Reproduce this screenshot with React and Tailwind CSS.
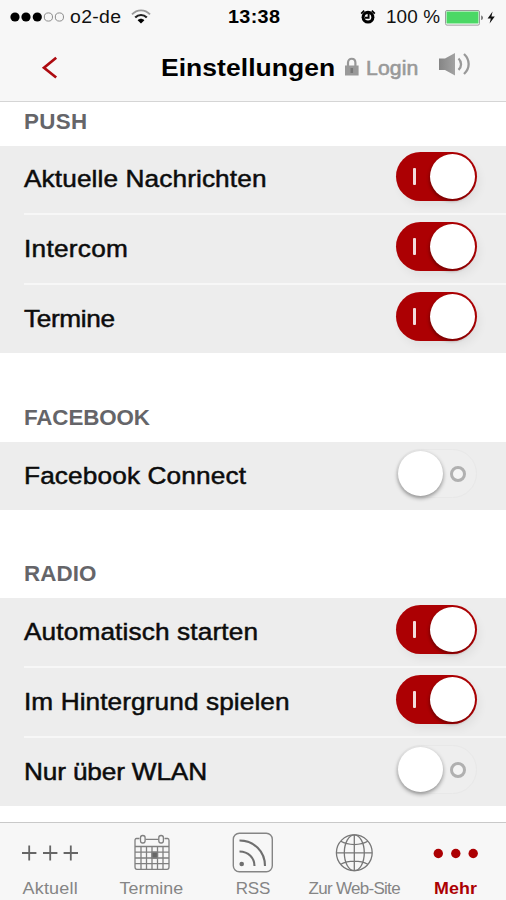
import React from "react";

function Toggle({ on }) {
  if (on) {
    return (
      <div className="flex h-[49px] w-[81px] items-center justify-between rounded-full bg-[#ac0003] pl-[17px] pr-[2px] shadow-[3px_5px_8px_rgba(0,0,0,0.05)]">
        <div className="h-[17px] w-[3px] rounded-[1px] bg-[#f3dcdc]" />
        <div className="h-[45px] w-[45px] rounded-full bg-white shadow-[-1px_2px_3px_rgba(60,0,0,0.45)]" />
      </div>
    );
  }
  return (
    <div className="flex h-[49px] w-[81px] items-center justify-between rounded-full border border-[#e8e8e8] bg-[#eeeeee] pl-[1px] pr-[10px]">
      <div className="h-[45px] w-[45px] rounded-full bg-white shadow-[0_2px_4px_rgba(0,0,0,0.42)]" />
      <div className="h-[16px] w-[16px] rounded-full border-[3px] border-[#b0b0b0] bg-[#f4f4f4]" />
    </div>
  );
}

function Row({ label, tracking, on, height, pad = "pt-[1px]", first }) {
  return (
    <div className={`flex items-start justify-between pl-6 ${height}`}>
      <div className={`flex w-full justify-between pr-[29px] ${pad} ${first ? "" : "border-t-2 border-[#f7f7f7]"}`}>
        <span
          className={`origin-left scale-x-[1.07] whitespace-nowrap pt-[19px] text-[24.5px] leading-[28px] text-[#0c0c0c] [-webkit-text-stroke:0.5px_#0c0c0c] ${tracking}`}
        >
          {label}
        </span>
        <div className="pt-[6px]">
          <Toggle on={on} />
        </div>
      </div>
    </div>
  );
}

function Heading({ children, className }) {
  return (
    <h2 className={`flex items-end bg-white pl-6 text-[21.5px] font-bold leading-[24px] text-[#656569] ${className}`}>
      <span className="block origin-left scale-x-[1.04]">{children}</span>
    </h2>
  );
}

function StatusBar() {
  return (
    <div className="flex h-[34px] items-center text-[18px] leading-[20px] text-[#111]">
      <svg className="ml-[10px] block shrink-0" width="55" height="12" viewBox="0 0 55 12">
        <circle cx="5" cy="6" r="4.6" fill="#000" />
        <circle cx="16" cy="6" r="4.6" fill="#000" />
        <circle cx="27.3" cy="6" r="4.6" fill="#000" />
        <circle cx="38.4" cy="6" r="4.1" fill="none" stroke="#808080" strokeWidth="0.9" />
        <circle cx="49.4" cy="6" r="4.1" fill="none" stroke="#808080" strokeWidth="0.9" />
      </svg>
      <span className="ml-[5px] w-[57px] origin-left scale-x-[1.08] whitespace-nowrap tracking-[0.3px]">o2-de</span>
      <svg className="ml-[3px] block shrink-0" width="22" height="16" viewBox="0 0 22 16">
        <path d="M2 5.4C7-.1 15-.1 20 5.4" fill="none" stroke="#999" strokeWidth="1.8" />
        <path d="M5.2 8.6c3.4-3.5 8.2-3.5 11.6 0" fill="none" stroke="#222" strokeWidth="2.2" />
        <path d="M7.6 11.2c2-2 4.8-2 6.8 0L11 14.6z" fill="#000" />
      </svg>
      <span className="ml-[76px] w-[55px] origin-left scale-x-[1.1] whitespace-nowrap font-bold tracking-[0.3px] text-black">
        13:38
      </span>
      <svg className="ml-[77px] block shrink-0" width="16" height="16" viewBox="0 0 16 16">
        <circle cx="8" cy="8.2" r="6.4" fill="#000" />
        <circle cx="8" cy="8.2" r="3.3" fill="#f7f7f7" />
        <path d="M8.6 4.500V8.700H5" fill="none" stroke="#000" strokeWidth="1.9" />
        <path d="M1.200 4.600 4.200 1.600M14.800 4.600 11.800 1.600" stroke="#000" strokeWidth="1.800" />
      </svg>
      <span className="ml-[10px] w-[54px] origin-left scale-x-[1.05] whitespace-nowrap tracking-[0.1px]">100 %</span>
      <svg className="ml-[5px] mt-px block shrink-0" width="52" height="16" viewBox="0 0 52 16">
        <rect x="0.5" y="0.5" width="34" height="14.6" rx="1.5" fill="#fff" stroke="#9b9b9b" />
        <rect x="1.5" y="1.5" width="32" height="12" fill="#4bd865" />
        <path d="M36.3 5.5c2 .6 2 4 0 4.6z" fill="#555" />
        <path d="M47.6 1.6 42.6 8.4H45.8L44.6 13.4 49.8 6.6H46.4z" fill="#111" />
      </svg>
    </div>
  );
}

function NavBar() {
  return (
    <div className="flex h-[67px] items-center">
      <svg className="ml-[41px] block shrink-0" width="18" height="24" viewBox="0 0 18 24">
        <path d="M15.2 1.7 3 11.7 15.2 21.500" fill="none" stroke="#ad0a10" strokeWidth="2.7" />
      </svg>
      <h1 className="ml-[102px] w-[177px] origin-left scale-x-[1.08] whitespace-nowrap text-[24.5px] font-bold leading-[28px] tracking-[0.05px] text-black">
        Einstellungen
      </h1>
      <svg className="-mt-[2px] ml-[6px] block shrink-0" width="16" height="20" viewBox="0 0 16 20">
        <path d="M4 9V5.8C4 .4 11.4.4 11.4 5.8V9" fill="none" stroke="#979797" strokeWidth="2.2" />
        <path d="M1 8.5H14.6V18.500H1z" fill="#999" />
        <path d="M7.8 11v5" stroke="#777" strokeWidth="2.6" />
      </svg>
      <span className="ml-[6px] w-[53px] origin-left scale-x-[1.06] whitespace-nowrap text-[20px] leading-[22px] tracking-[0.1px] text-[#999] [-webkit-text-stroke:0.6px_#999]">
        Login
      </span>
      <svg className="-mt-[7px] ml-[19px] block shrink-0" width="34" height="26" viewBox="0 0 34 26">
        <defs>
          <linearGradient id="speaker" x1="0" x2="1" y1="0" y2="0">
            <stop offset="0" stopColor="#858585" />
            <stop offset="1" stopColor="#a3a3a3" />
          </linearGradient>
        </defs>
        <path d="M1 7.5H7L17 2V24.5L7 19H1z" fill="url(#speaker)" />
        <path d="M20.500 7.500c3.400 3.200 3.400 8.200 0 11.400" fill="none" stroke="#999" strokeWidth="2.300" />
        <path d="M26 3c6.200 5.800 6.200 14.200 0 20" fill="none" stroke="#999" strokeWidth="2.300" />
      </svg>
    </div>
  );
}

function Tab({ icon, label, className }) {
  return (
    <div className="flex flex-col items-center">
      <div className="flex h-[53px] items-end justify-center">{icon}</div>
      <span className={`mt-[3px] whitespace-nowrap text-[17px] leading-[20px] ${className}`}>{label}</span>
    </div>
  );
}

const plusIcon = (
  <svg className="block" width="58" height="46" viewBox="0 0 58 46" stroke="#666" strokeWidth="1.8">
    <path d="M0 23H14.400M7.200 15.500V30.500M21 23H35.400M28.200 15.500V30.500M41.600 23H56M48.800 15.500V30.500" />
  </svg>
);

const calendarIcon = (
  <svg className="block" width="38" height="46" viewBox="0 0 38 46" fill="none" stroke="#808080" strokeWidth="1.3">
    <path d="M6.500 8.500H3.400Q2 8.500 2 10.500V37Q2 39.300 4 39.300H34Q36 39.300 36 37V10.500Q36 8.500 34.600 8.500H31.500M12.500 9.300H25.500" />
    <rect x="7.500" y="5.500" width="4.600" height="7.500" rx="2.200" />
    <rect x="25.800" y="5.500" width="4.600" height="7.500" rx="2.200" />
    <path d="M2 16.500H36M2 22.200H36M2 28H36M2 33.700H36M8 16.500V39M13.500 16.500V39M19 16.500V39M24.500 16.500V39M30 16.500V39" />
    <path d="M19 22.200H24.500V28H19z" fill="#686868" />
  </svg>
);

const rssIcon = (
  <svg className="block" width="42" height="46" viewBox="0 0 42 46" fill="none" stroke="#6f6f6f">
    <rect x="1.300" y="3.300" width="39" height="38.500" rx="6" stroke="#858585" strokeWidth="1.400" />
    <path d="M7.500 10.500C22 10.500 33 21.500 33 36M7.500 21.500C16.500 21.500 22.500 28 22.500 36" strokeWidth="2.100" />
    <circle cx="9.700" cy="34" r="2.300" fill="#6f6f6f" stroke="none" />
  </svg>
);

const globeIcon = (
  <svg className="block" width="38" height="46" viewBox="0 0 38 46" fill="none" stroke="#777" strokeWidth="1.300">
    <circle cx="19.300" cy="22.800" r="17.900" />
    <ellipse cx="19.300" cy="22.800" rx="10" ry="17.900" />
    <path d="M19.300 5V41M1.300 22.800H37M5.800 11.300C13.300 15.600 25.300 15.600 32.800 11.300M5.800 34.300C13.300 30 25.300 30 32.800 34.300" />
  </svg>
);

const moreIcon = (
  <svg className="block" width="46" height="46" viewBox="0 0 46 46" fill="#ac0003">
    <circle cx="6.300" cy="23.500" r="4.700" />
    <circle cx="23.800" cy="23.500" r="4.700" />
    <circle cx="41.200" cy="23.500" r="4.700" />
  </svg>
);

export default function App() {
  return (
    <div className="flex h-[900px] w-[506px] flex-col overflow-hidden bg-white font-['Liberation_Sans',Arial,sans-serif]">
      <header className="h-[102px] shrink-0 border-b border-[#d5d5d5] bg-[#f7f7f7]">
        <StatusBar />
        <NavBar />
      </header>

      <main className="h-[720px] shrink-0">
        <Heading className="h-[44px] pb-[12px] tracking-[0.3px]">PUSH</Heading>
        <div className="bg-[#ededed]">
          <Row first pad="pt-0" label="Aktuelle Nachrichten" tracking="tracking-[0.1px]" on height="h-[67px]" />
          <Row label="Intercom" tracking="tracking-[0.25px]" on height="h-[70px]" />
          <Row label="Termine" tracking="tracking-[-0.35px]" on height="h-[70px]" />
        </div>

        <Heading className="h-[89px] pb-[12px] tracking-[-0.1px]">FACEBOOK</Heading>
        <div className="bg-[#ededed]">
          <Row first label="Facebook Connect" tracking="tracking-[0.120px]" height="h-[68px]" />
        </div>

        <Heading className="h-[88px] pb-[12px] tracking-[0.1px]">RADIO</Heading>
        <div className="bg-[#ededed]">
          <Row first label="Automatisch starten" tracking="tracking-[0.120px]" on height="h-[68px]" />
          <Row label="Im Hintergrund spielen" tracking="tracking-[0.080px]" on height="h-[70px]" />
          <Row label="Nur über WLAN" tracking="tracking-[-0.150px]" height="h-[70px]" />
        </div>
      </main>

      <nav className="grid h-[78px] shrink-0 grid-cols-5 border-t border-[#c9c9c9] bg-[#f7f7f7] text-[#858585]">
        <Tab icon={plusIcon} label="Aktuell" className="scale-x-[1.06] tracking-[0.200px]" />
        <Tab icon={calendarIcon} label="Termine" className="scale-x-[1.05] tracking-[0.050px]" />
        <Tab icon={rssIcon} label="RSS" className="tracking-[-0.100px]" />
        <Tab icon={globeIcon} label="Zur Web-Site" className="tracking-[-0.700px]" />
        <Tab icon={moreIcon} label="Mehr" className="scale-x-[1.05] font-bold tracking-[0.100px] text-[#ac0003]" />
      </nav>
    </div>
  );
}
